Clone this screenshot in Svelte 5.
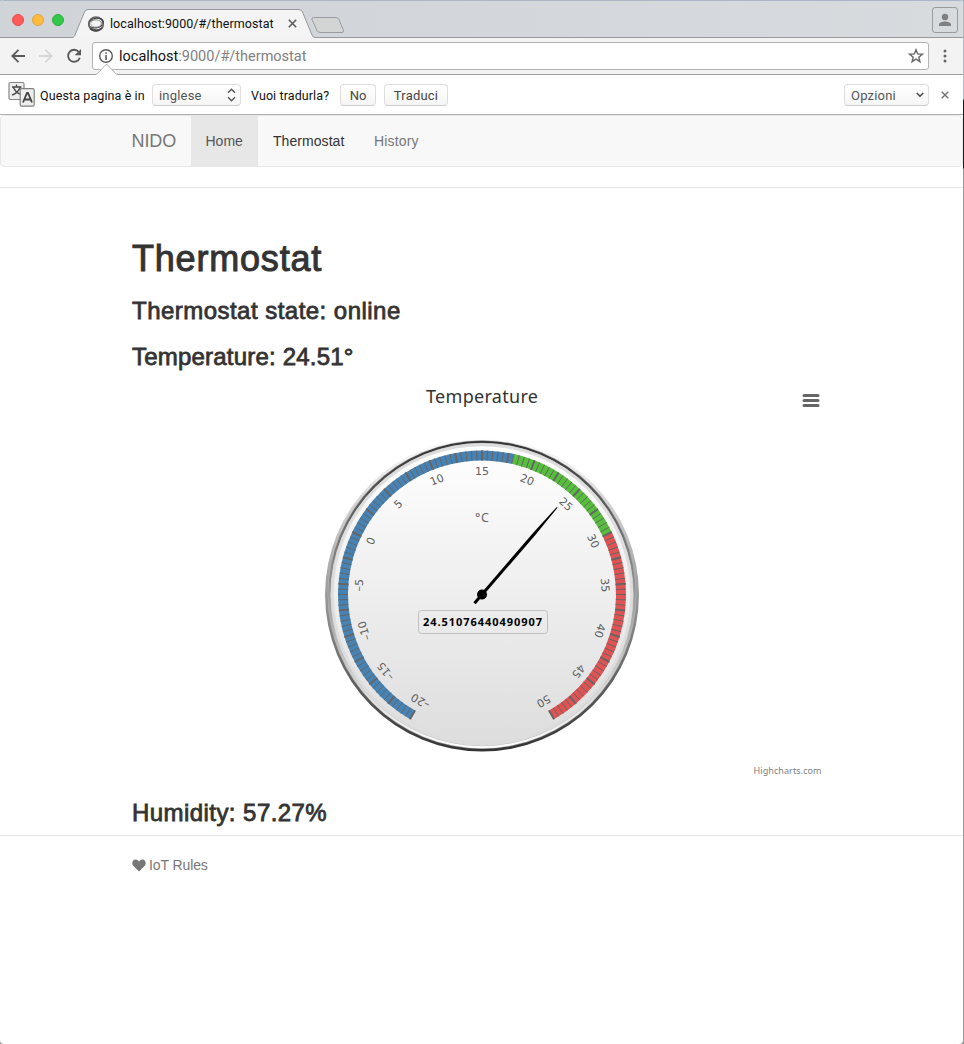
<script>
  const cx = 482;
  const cy = 214.5;
  const R = 144;
  const degPerUnit = 300 / 70;
  const temperature = 24.51076440490907;

  const angle = (v) => (v - 15) * degPerUnit;
  const point = (v, r) => {
    const a = (angle(v) * Math.PI) / 180;
    return [cx + r * Math.sin(a), cy - r * Math.cos(a)];
  };
  const band = (from, to) => {
    const large = angle(to) - angle(from) > 180 ? 1 : 0;
    const [a, b] = point(from, R);
    const [c, d] = point(to, R);
    const [e, f] = point(to, R - 10);
    const [g, h] = point(from, R - 10);
    return `M${a} ${b}A${R} ${R} 0 ${large} 1 ${c} ${d}L${e} ${f}A${R - 10} ${R - 10} 0 ${large} 0 ${g} ${h}Z`;
  };
  const bands = [
    { from: -20, to: 18, color: '#4682b4' },
    { from: 18, to: 30, color: '#55bf3b' },
    { from: 30, to: 50, color: '#df5353' },
  ];
  const minor = Array.from({ length: 141 }, (_, i) => -20 + i / 2);
  const major = Array.from({ length: 29 }, (_, i) => -20 + i * 2.5);
  const labels = Array.from({ length: 15 }, (_, i) => -20 + i * 5);
</script>

<div class="desktop">
  <div class="window">
    <header class="strip">
      <div class="lights"><i class="red"></i><i class="amber"></i><i class="green"></i></div>
      <div class="tab">
        <svg class="shape" width="244" height="29" viewBox="0 0 244 29">
          <path d="M0 29V28.5C2 28.5 2.500 27 3 26L12.500 3Q13.500 .5 16 .5H227Q229.500 .5 230.500 3L240 26Q241 28.500 243 28.500V29Z" fill="#f4f4f4" />
          <path d="M0 28.500C2 28.500 2.500 27 3 26L12.500 3Q13.500 .5 16 .5H227Q229.500 .5 230.500 3L240 26Q241 28.500 243 28.500" fill="none" stroke="#96999b" />
        </svg>
        <div class="tabrow">
          <svg width="18" height="18" viewBox="0 0 18 18" fill="none">
            <ellipse cx="9" cy="9" rx="7.300" ry="7" stroke="#666" stroke-width="1.600" />
            <ellipse cx="9" cy="8" rx="7.400" ry="4.800" transform="rotate(-12 9 8)" stroke="#444" stroke-width="1.300" />
            <ellipse cx="9" cy="10" rx="7.200" ry="4.700" transform="rotate(14 9 10)" stroke="#777" stroke-width="1.200" />
            <ellipse cx="9" cy="8.500" rx="5.300" ry="3.600" fill="#f4f4f4" stroke="#999" stroke-width=".8" />
            <path d="M3 13.500Q9 18 15 13" stroke="#444" stroke-width="1.600" />
          </svg>
          <span class="tabtitle">localhost:9000/#/thermostat</span>
          <svg width="9" height="9" viewBox="0 0 9 9" stroke="#5a5a5a" stroke-width="1.600"><path d="M.8.8l7.400 7.400M8.200.8L.8 8.200" /></svg>
        </div>
      </div>
      <svg class="newtab" width="36" height="18" viewBox="0 0 36 18"><path d="M3.500 1.500H26Q28 1.500 29 3.500L33.500 14.500Q34 16.500 32 16.500H10Q8 16.500 7 14.500L2 3.500Q1.500 1.500 3.500 1.500Z" fill="#d3d4d4" stroke="#999b9d" /></svg>
      <div class="user">
        <svg width="14" height="14" viewBox="0 0 14 14" fill="#808080"><circle cx="7" cy="4" r="3.200" /><path d="M1 13V11.500C1 9.500 4.500 8.500 7 8.500s6 1 6 3V13Z" /></svg>
      </div>
    </header>

    <div class="toolbar">
      <svg width="16" height="16" viewBox="0 0 16 16" fill="none" stroke="#5a5a5a" stroke-width="1.800"><path d="M15 8H2.500M8.500 1.800L2.300 8l6.200 6.200" /></svg>
      <svg class="fwd" width="16" height="16" viewBox="0 0 16 16" fill="none" stroke="#d6d6d6" stroke-width="1.800"><path d="M1 8h12.500M7.500 1.800L13.700 8l-6.200 6.200" /></svg>
      <svg class="reload" width="16" height="16" viewBox="0 0 16 16"><path d="M12.800 4A6 6 0 1 0 13.800 9.800" fill="none" stroke="#5a5a5a" stroke-width="1.900" /><path d="M15 1V7.300H8.700Z" fill="#5a5a5a" /></svg>
      <div class="omnibox">
        <svg width="16" height="16" viewBox="0 0 16 16"><circle cx="8" cy="8" r="6.300" fill="none" stroke="#5a5a5a" stroke-width="1.400" /><path d="M8 4.200V5.800M8 7V12" stroke="#5a5a5a" stroke-width="1.600" /></svg>
        <span class="url">localhost<b>:9000/#/thermostat</b></span>
        <svg class="star" width="16" height="16" viewBox="0 0 16 16"><path d="M8 1.700L9.700 5.900 14.300 6.200 10.800 9.200 11.900 13.700 8 11.200 4.100 13.700 5.200 9.200 1.700 6.200 6.300 5.900Z" fill="none" stroke="#666" stroke-width="1.400" /></svg>
      </div>
      <svg class="dots" width="4" height="16" viewBox="0 0 4 16" fill="#666"><circle cx="2" cy="3" r="1.500" /><circle cx="2" cy="8" r="1.500" /><circle cx="2" cy="13" r="1.500" /></svg>
    </div>

    <div class="infobar">
      <svg class="notch" width="24" height="13" viewBox="0 0 24 13"><path d="M0 13L1 11.500 11.500 .8 22 11.500 24 13Z" fill="#fff" /><path d="M0 11.500Q1.500 11.500 2.500 10.500L11.500 1L20.500 10.500Q21.500 11.500 23.500 11.500" fill="none" stroke="#aaa" stroke-width=".9" /></svg>
      <svg class="translate" width="28" height="28" viewBox="0 0 28 28" fill="none">
        <rect x="1" y="1.500" width="15" height="17" rx="1.500" fill="#eee" stroke="#858585" stroke-width="1.200" />
        <path d="M4 6H13.500M8.500 3.500V6M5.500 6.500Q7.500 11.500 13 13.500M12 6.500Q10 12 4 14" stroke="#484848" stroke-width="1.400" />
        <rect x="12.200" y="7.700" width="14" height="17.500" rx="1.500" fill="#eee" stroke="#808080" stroke-width="1.200" />
        <path d="M15 21.500L19 12h1L24 21.500M16.500 18.500h6" stroke="#444" stroke-width="1.800" />
      </svg>
      <span class="msg first">Questa pagina è in</span>
      <div class="btn lang"><span>inglese</span><svg width="9" height="14" viewBox="0 0 9 14" fill="none" stroke="#555" stroke-width="1.400"><path d="M1 4.800L4.500 1.300 8 4.800M1 9.200L4.500 12.700 8 9.200" /></svg></div>
      <span class="msg second">Vuoi tradurla?</span>
      <div class="btn no">No</div>
      <div class="btn yes">Traduci</div>
      <div class="btn opts"><span>Opzioni</span><svg width="8" height="6" viewBox="0 0 8 6" fill="none" stroke="#444" stroke-width="1.500"><path d="M.8 1L4 4.200 7.200 1" /></svg></div>
      <svg class="dismiss" width="8" height="8" viewBox="0 0 8 8" stroke="#777" stroke-width="1.500"><path d="M.7.7l6.600 6.600M7.300.7L.7 7.300" /></svg>
    </div>

    <nav>
      <span class="brand">NIDO</span>
      <span class="item active">Home</span>
      <span class="item hover">Thermostat</span>
      <span class="item last">History</span>
    </nav>

    <main>
      <h1>Thermostat</h1>
      <h3 class="state">Thermostat state: online</h3>
      <h3 class="temp">Temperature: 24.51°</h3>

      <svg class="chart" width="963" height="400" viewBox="0 0 963 400">
        <defs>
          <linearGradient id="rimOuter" x1="0" y1="0" x2="0" y2="1"><stop offset="0" stop-color="#fff" /><stop offset="1" stop-color="#333" /></linearGradient>
          <linearGradient id="rimInner" x1="0" y1="0" x2="0" y2="1"><stop offset="0" stop-color="#333" /><stop offset="1" stop-color="#fff" /></linearGradient>
          <linearGradient id="face" x1="0" y1="0" x2="0" y2="1"><stop offset="0" stop-color="#fff" /><stop offset="1" stop-color="#ddd" /></linearGradient>
        </defs>
        <text class="title" x="426" y="23" textLength="112">Temperature</text>
        <path d="M804 15.500h14M804 20.500h14M804 25.500h14" stroke="#666" stroke-width="3" stroke-linecap="round" />

        <circle {cx} {cy} r={R * 1.09} fill="url(#rimOuter)" />
        <circle {cx} {cy} r={R * 1.07} fill="url(#rimInner)" stroke="silver" stroke-width=".5" />
        <circle {cx} {cy} r={R * 1.05} fill="url(#face)" stroke="silver" />
        <circle {cx} {cy} r={R * 1.04} fill="none" stroke="#ddd" stroke-width={R * 0.02} />

        {#each bands as b}<path d={band(b.from, b.to)} fill={b.color} />{/each}
        {#each minor as v}
          {@const [x1, y1] = point(v, R)}
          {@const [x2, y2] = point(v, R - 10)}
          <line {x1} {y1} {x2} {y2} stroke="#666" />
        {/each}
        {#each major as v}
          {@const [x1, y1] = point(v, R)}
          {@const [x2, y2] = point(v, R - 10)}
          <line {x1} {y1} {x2} {y2} stroke="#666" stroke-width="2" />
        {/each}
        {#each labels as v}
          <text class="tick" x={cx} y={cy - 119.5} transform="rotate({angle(v)} {cx} {cy})">{v < 0 ? '–' + -v : v}</text>
        {/each}
        <text class="unit" x="475" y="141.500" textLength="14">°C</text>

        <rect x="418.500" y="230.500" width="129" height="23" rx="3" fill="none" stroke="silver" />
        <text class="value" x="423" y="246" textLength="119">{temperature}</text>
        <g transform="translate({cx} {cy}) rotate({angle(temperature)})">
          <path d="M-1.500 11.500V-80.600L-.5-115.200H.5L1.500-80.600V11.500Z" />
          <circle r="5" />
        </g>
        <text class="credit" x="753.500" y="394" textLength="68">Highcharts.com</text>
      </svg>

      <h3 class="humidity">Humidity: 57.27%</h3>
    </main>

    <footer>
      <svg width="14" height="13" viewBox="0 0 14 13"><path d="M7 12.500L1.200 6.700C-.8 4.300.8 .6 3.600.6 5.300.6 6.500 1.600 7 2.800 7.500 1.600 8.700.6 10.400.6 13.200.6 14.800 4.300 12.800 6.700Z" fill="#777" /></svg>
      <span>IoT Rules</span>
    </footer>
  </div>
</div>

<style>
  :global(body) { margin: 0; background: #a6a9ab; }
  .desktop {
    box-sizing: border-box; width: 964px; height: 1044px; padding-right: 1px; overflow: hidden;
    background: linear-gradient(#a6bccb 0, #a6bccb 99px, #1a1d20 100px, #1a1d20 168px, #999 169px);
  }
  .window {
    height: 1044px; display: flex; flex-direction: column; background: #fff; overflow: hidden;
    border-radius: 4px; font-family: 'Liberation Sans', sans-serif;
  }
  svg { display: block; flex: none; }
  span { white-space: nowrap; }

  .strip {
    box-sizing: border-box; height: 38px; display: flex; flex: none; align-items: flex-start;
    border-top: 1px solid #a9b8c4; background: linear-gradient(#96999b, #96999b) bottom / 100% 1px no-repeat,
      linear-gradient(90deg, #d0d4d9, #d3d7db 50%, #d8dbde);
  }
  .lights { display: flex; gap: 8px; padding: 13px 0 0 12px; width: 60px; }
  .lights i { box-sizing: border-box; width: 12px; height: 12px; border-radius: 50%; }
  .red { background: #fc5b57; border: 1px solid #e5504c; }
  .amber { background: #fdbc40; border: 1px solid #e0a43a; }
  .green { background: #34c84a; border: 1px solid #2bae3c; }
  .tab { display: grid; width: 244px; margin-top: 8px; }
  .shape, .tabrow { grid-area: 1 / 1; }
  .tabrow { display: flex; align-items: center; padding-left: 15px; height: 29px; }
  .tabtitle { width: 178px; margin-left: 5px; font: 12.500px Roboto, sans-serif; letter-spacing: .08px; color: #111; }
  .newtab { margin: 15px 0 0 -6px; }
  .user {
    box-sizing: border-box; width: 26px; height: 26px; margin: 6px 5px 0 auto; display: grid; place-items: center;
    border: 1px solid #999b9d; border-radius: 3px;
  }

  .toolbar {
    box-sizing: border-box; height: 37px; flex: none; display: flex; align-items: center; padding-left: 10px;
    background: #f3f3f3; border-bottom: 1px solid #a0a0a0;
  }
  .fwd { margin-left: 12px; }
  .reload { margin-left: 12px; }
  .omnibox {
    box-sizing: border-box; display: flex; align-items: center; width: 837px; height: 28px; margin-left: 10px;
    padding-left: 5px; border: 1px solid #b3b3b3; border-radius: 3px; background: #fff;
  }
  .url { margin-left: 5px; font: 14.500px Roboto, sans-serif; letter-spacing: 0; color: #111; }
  .url b { font-weight: 400; color: #808080; }
  .star { margin: 0 4px 0 auto; }
  .dots { margin-left: 14px; }

  .infobar {
    box-sizing: border-box; position: relative; height: 40px; flex: none; display: flex; align-items: center;
    padding-top: 1px; background: #fff; border-bottom: 1px solid #b0b0b0; color: #111;
  }
  .notch { position: absolute; left: 95px; top: -12px; }
  .translate { margin-left: 8px; }
  .msg { letter-spacing: .1px; font: 12.500px Roboto, sans-serif; }
  .first { width: 113px; margin-left: 4px; }
  .second { width: 89px; margin-left: 10px; }
  .btn {
    box-sizing: border-box; display: flex; align-items: center; justify-content: center; height: 22px;
    border: 1px solid #dedede; border-bottom-color: #ccc; border-radius: 4px;
    background: linear-gradient(#fff, #f5f5f5); color: #444; font: 13px Roboto, sans-serif;
  }
  .lang, .opts { justify-content: space-between; padding: 0 4px 0 6px; color: #555; letter-spacing: .2px; }
  .lang { width: 89px; margin-left: -1px; }
  .no { width: 36px; }
  .yes { width: 64px; margin-left: 8px; letter-spacing: .2px; }
  .opts { width: 85px; margin-left: auto; }
  .dismiss { margin: 0 14px 0 12px; }

  nav {
    box-sizing: border-box; height: 52px; flex: none; display: flex; align-items: center; padding-left: 130.500px;
    border: 1px solid #e7e7e7; border-radius: 4px; background: #f8f8f8; font-size: 14px; color: #777;
  }
  .brand { width: 59.500px; font-size: 18px; letter-spacing: -.1px; }
  .item { box-sizing: border-box; height: 50px; padding: 0 14.500px; line-height: 51px; }
  .active { width: 67px; background: #e7e7e7; color: #555; }
  .hover { width: 101.500px; color: #333; padding-left: 15px; letter-spacing: .06px; }
  .last { letter-spacing: .15px; }

  main { margin-top: 20px; border-top: 1px solid #e5e5e5; height: 647px; display: flex; flex-direction: column; border-bottom: 1px solid #e5e5e5; }
  h1, h3 { margin: 0 0 0 132px; color: #333; font-weight: 400; white-space: nowrap; }
  h1 { margin-top: 51px; font-size: 36px; line-height: 40px; letter-spacing: .8px; -webkit-text-stroke: 1px #333; }
  h3 { font-size: 24px; line-height: 26px; -webkit-text-stroke: .8px #333; }
  .state { margin-top: 19px; letter-spacing: .47px; }
  .temp { margin-top: 20px; letter-spacing: .2px; }
  .chart { margin-top: 10px; }
  .humidity { margin-top: 20px; letter-spacing: .44px; }

  text { font-family: 'Noto Sans', 'DejaVu Sans', sans-serif; }
  .title { font-size: 18px; fill: #333; }
  .tick { font: 11px 'DejaVu Sans', sans-serif; fill: #606060; text-anchor: middle; }
  .unit { font-size: 12.500px; fill: #666; }
  .value { font-size: 11px; font-weight: 700; }
  .credit { font-size: 9px; fill: #808080; }

  footer { display: flex; align-items: center; gap: 3px; margin: 20px 0 0 132px; font-size: 14px; line-height: 18px; letter-spacing: -.1px; color: #777; }
</style>
